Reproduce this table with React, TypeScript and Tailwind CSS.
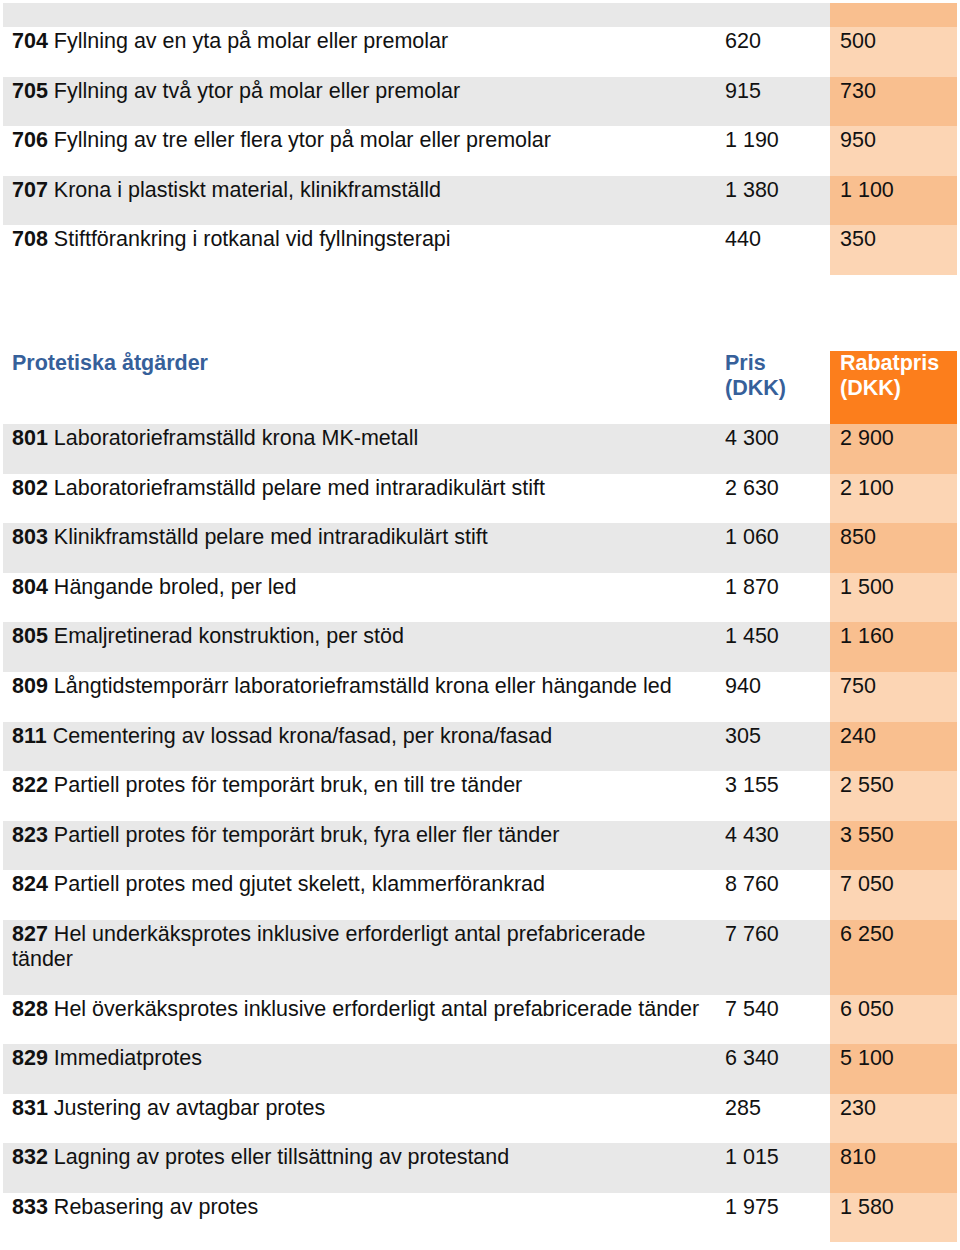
type Row = { code: string; text: string; price: string; rabat: string };

const top: Row[] = [
  { code: '704', text: 'Fyllning av en yta på molar eller premolar', price: '620', rabat: '500' },
  { code: '705', text: 'Fyllning av två ytor på molar eller premolar', price: '915', rabat: '730' },
  { code: '706', text: 'Fyllning av tre eller flera ytor på molar eller premolar', price: '1 190', rabat: '950' },
  { code: '707', text: 'Krona i plastiskt material, klinikframställd', price: '1 380', rabat: '1 100' },
  { code: '708', text: 'Stiftförankring i rotkanal vid fyllningsterapi', price: '440', rabat: '350' },
];

const protetik: Row[] = [
  { code: '801', text: 'Laboratorieframställd krona MK-metall', price: '4 300', rabat: '2 900' },
  { code: '802', text: 'Laboratorieframställd pelare med intraradikulärt stift', price: '2 630', rabat: '2 100' },
  { code: '803', text: 'Klinikframställd pelare med intraradikulärt stift', price: '1 060', rabat: '850' },
  { code: '804', text: 'Hängande broled, per led', price: '1 870', rabat: '1 500' },
  { code: '805', text: 'Emaljretinerad konstruktion, per stöd', price: '1 450', rabat: '1 160' },
  { code: '809', text: 'Långtidstemporärr laboratorieframställd krona eller hängande led', price: '940', rabat: '750' },
  { code: '811', text: 'Cementering av lossad krona/fasad, per krona/fasad', price: '305', rabat: '240' },
  { code: '822', text: 'Partiell protes för temporärt bruk, en till tre tänder', price: '3 155', rabat: '2 550' },
  { code: '823', text: 'Partiell protes för temporärt bruk, fyra eller fler tänder', price: '4 430', rabat: '3 550' },
  { code: '824', text: 'Partiell protes med gjutet skelett, klammerförankrad', price: '8 760', rabat: '7 050' },
  { code: '827', text: 'Hel underkäksprotes inklusive erforderligt antal prefabricerade tänder', price: '7 760', rabat: '6 250' },
  { code: '828', text: 'Hel överkäksprotes inklusive erforderligt antal prefabricerade tänder', price: '7 540', rabat: '6 050' },
  { code: '829', text: 'Immediatprotes', price: '6 340', rabat: '5 100' },
  { code: '831', text: 'Justering av avtagbar protes', price: '285', rabat: '230' },
  { code: '832', text: 'Lagning av protes eller tillsättning av protestand', price: '1 015', rabat: '810' },
  { code: '833', text: 'Rebasering av protes', price: '1 975', rabat: '1 580' },
];

function PriceRow({ row, shaded }: { row: Row; shaded: boolean }) {
  return (
    <div className="grid grid-cols-[715px_112px_127px] leading-[25px]">
      <div className={`pl-[9px] pr-[13px] pt-[2px] pb-[22.6px] ${shaded ? 'bg-[#e8e8e8]' : ''}`}>
        <span className="font-bold">{row.code}</span> {row.text}
      </div>
      <div className={`pl-[7px] pt-[2px] ${shaded ? 'bg-[#e8e8e8]' : ''}`}>{row.price}</div>
      <div className={`pl-[10px] pt-[2px] ${shaded ? 'bg-[#f9bf8f]' : 'bg-[#fcd5b4]'}`}>{row.rabat}</div>
    </div>
  );
}

export default function App() {
  return (
    <div className="bg-white w-[960px] min-h-[1250px] pt-[3px] px-[3px] text-[21.5px] text-[#111] font-['Liberation_Sans',Arial,sans-serif]">
      <div className="grid grid-cols-[715px_112px_127px] h-[24px]">
        <div className="bg-[#e8e8e8]" />
        <div className="bg-[#e8e8e8]" />
        <div className="bg-[#f9bf8f]" />
      </div>
      {top.map((r, i) => (
        <PriceRow key={r.code} row={r} shaded={i % 2 === 1} />
      ))}

      <div className="h-[76px]" />

      <div className="grid grid-cols-[715px_112px_127px] leading-[25px] font-bold h-[73px]">
        <div className="pl-[9px] text-[#36609a]">Protetiska åtgärder</div>
        <div className="pl-[7px] text-[#36609a]">
          Pris
          <br />
          (DKK)
        </div>
        <div className="pl-[10px] bg-[#fc7e1c] text-white">
          Rabatpris
          <br />
          (DKK)
        </div>
      </div>
      {protetik.map((r, i) => (
        <PriceRow key={r.code} row={r} shaded={i % 2 === 0} />
      ))}
    </div>
  );
}
